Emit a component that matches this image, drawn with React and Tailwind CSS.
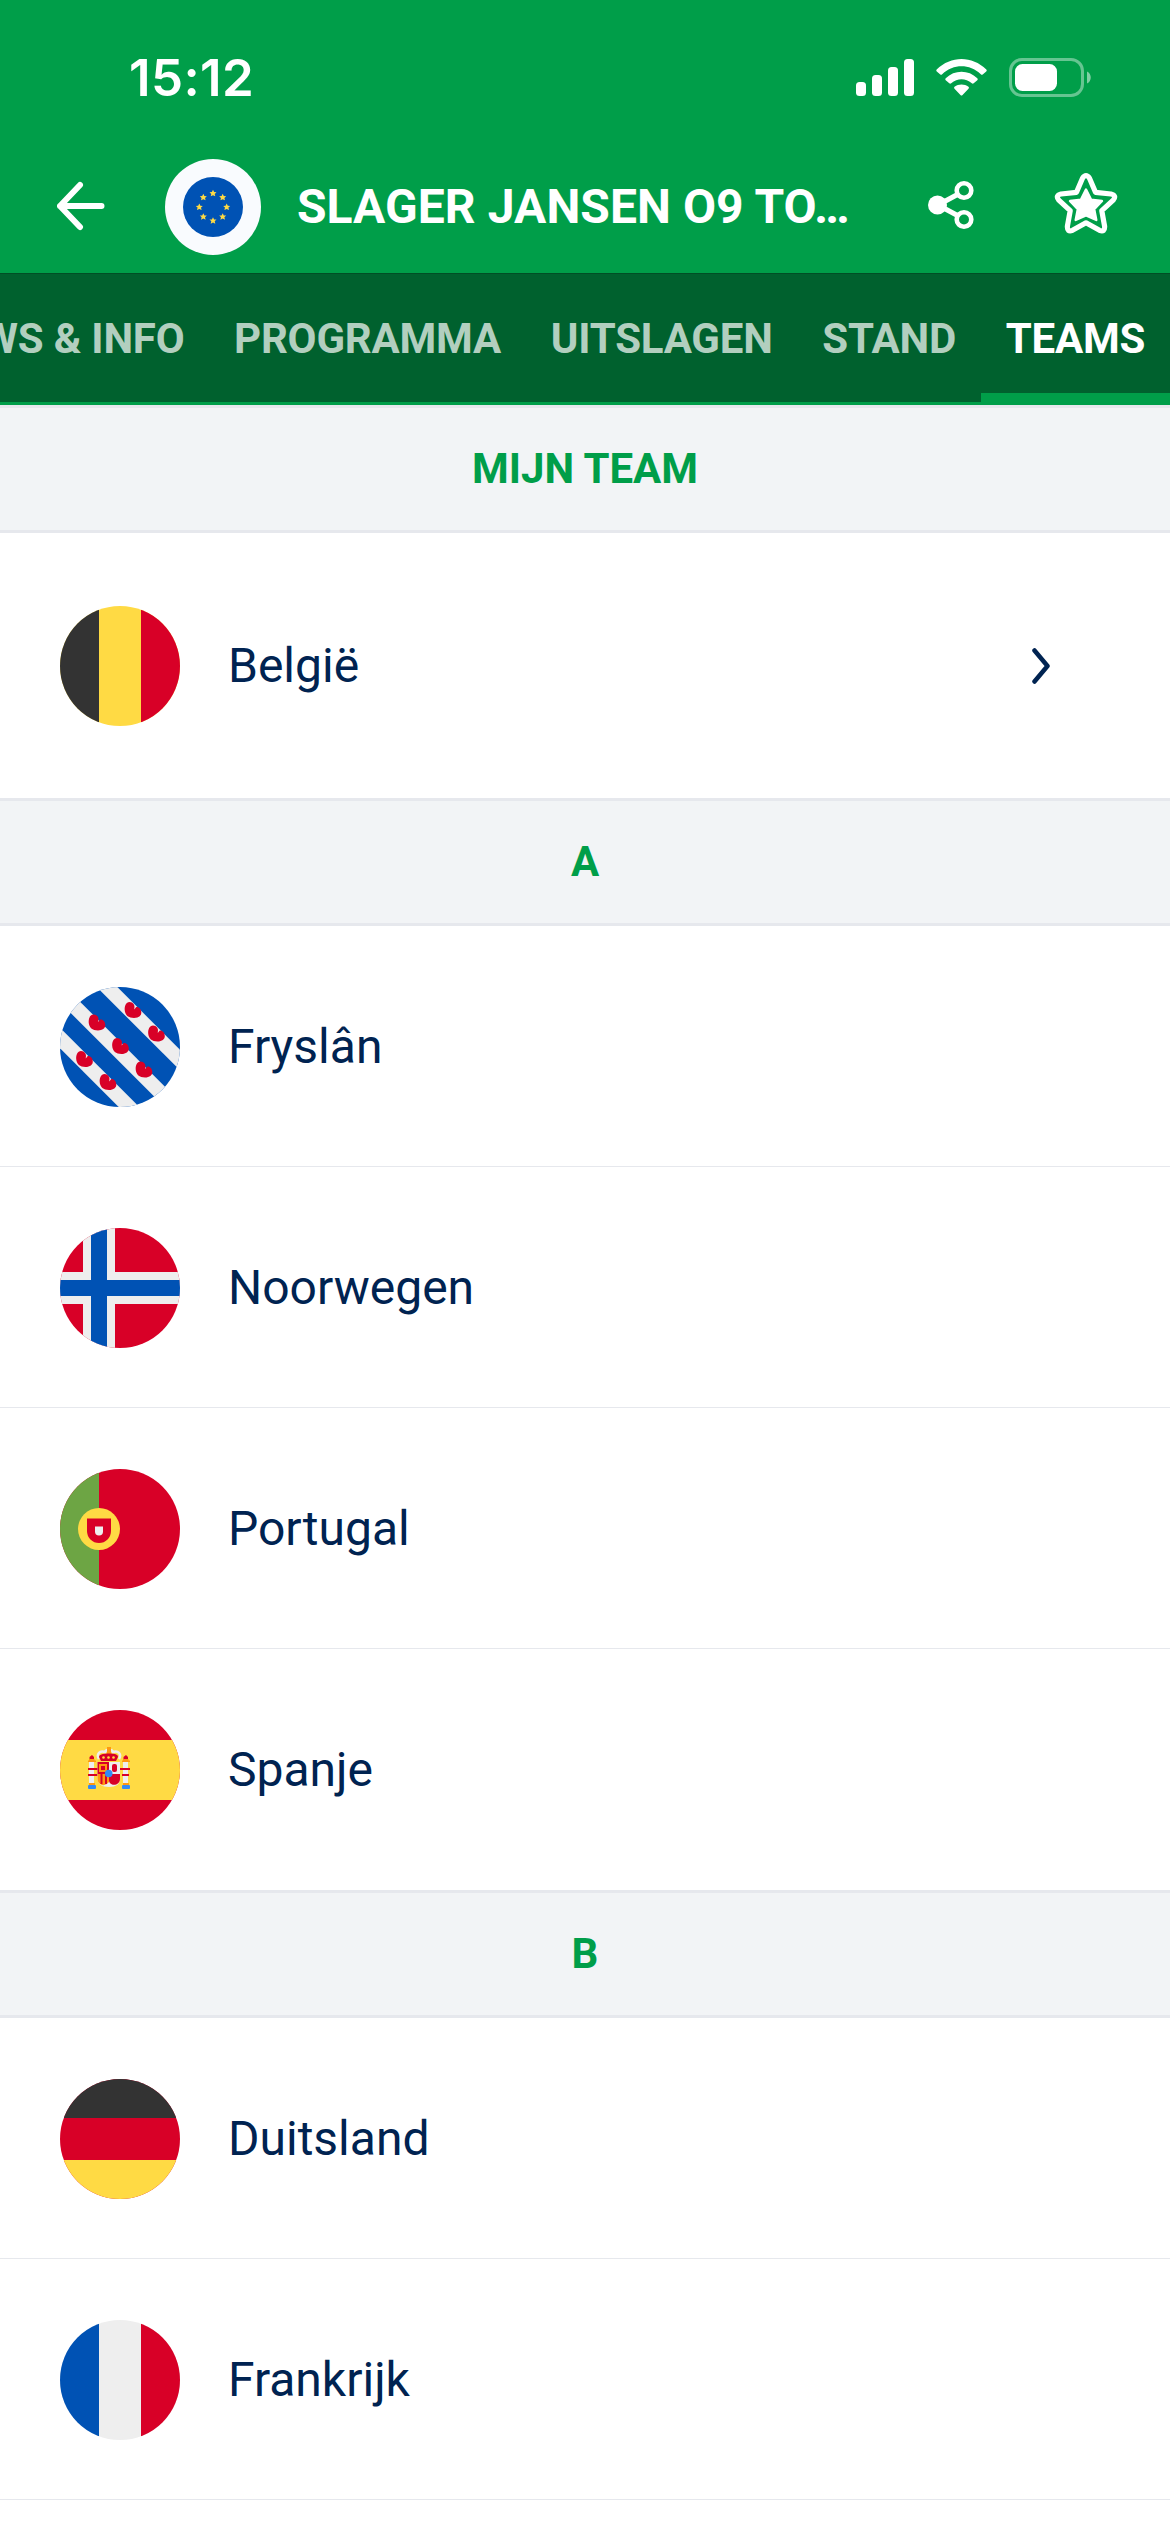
const flagColors = {
  red: '#d80027',
  blue: '#0052b4',
  yellow: '#ffda44',
  white: '#eeeeee',
  black: '#333333',
  green: '#6da544',
  orange: '#ff9811',
  sky: '#338af3',
}

const tabs = [
  { name: 'NEWS & INFO' },
  { name: 'PROGRAMMA' },
  { name: 'UITSLAGEN' },
  { name: 'STAND' },
  { name: 'TEAMS', active: true },
]

const groups = [
  {
    name: 'A',
    teams: [
      { name: 'Fryslân', flag: FrieslandFlag, divider: true },
      { name: 'Noorwegen', flag: NorwayFlag, divider: true },
      { name: 'Portugal', flag: PortugalFlag, divider: true },
      { name: 'Spanje', flag: SpainFlag },
    ],
  },
  {
    name: 'B',
    teams: [
      { name: 'Duitsland', flag: GermanyFlag, divider: true },
      { name: 'Frankrijk', flag: FranceFlag, divider: true },
    ],
  },
]

function Flag({ children }) {
  return (
    <svg
      aria-hidden="true"
      className="size-[120px] shrink-0 rounded-full"
      viewBox="0 0 120 120"
    >
      {children}
    </svg>
  )
}

function VerticalFlag({ left, middle, right }) {
  return (
    <Flag>
      <rect fill={middle} height="120" width="120" />
      <rect fill={left} height="120" width="39" />
      <rect fill={right} height="120" width="39" x="81" />
    </Flag>
  )
}

function BelgiumFlag() {
  return (
    <VerticalFlag
      left={flagColors.black}
      middle={flagColors.yellow}
      right={flagColors.red}
    />
  )
}

function FranceFlag() {
  return (
    <VerticalFlag
      left={flagColors.blue}
      middle={flagColors.white}
      right={flagColors.red}
    />
  )
}

function GermanyFlag() {
  return (
    <Flag>
      <rect fill={flagColors.red} height="120" width="120" />
      <rect fill={flagColors.black} height="39" width="120" />
      <rect fill={flagColors.yellow} height="39" width="120" y="81" />
    </Flag>
  )
}

// Centres of the seven red water lily leaves
const lilyLeaves = [
  [73, 23],
  [96.5, 46.5],
  [37, 35.5],
  [60.5, 59],
  [84, 82.5],
  [24.5, 72],
  [48, 95],
]

function FrieslandFlag() {
  return (
    <Flag>
      <rect fill={flagColors.blue} height="120" width="120" />
      <g stroke={flagColors.white} strokeWidth="14.6">
        <path d="M31 -16L140 93" />
        <path d="M-6 -1L122 127" />
        <path d="M-20 31L90 141" />
      </g>
      {lilyLeaves.map(([x, y]) => (
        <path
          d="M1.300 -1.500C2.300 -5 0 -8 -3.500 -8C-7 -8 -8.500 -4 -8.300 0C-8 5 -4.500 8 1 8C5.500 8 8.500 5.500 8.300 2.500C8.200 -1 5.500 -3.500 3 -2.800L1.300 -.6Z"
          fill={flagColors.red}
          key={`${x}-${y}`}
          transform={`translate(${x} ${y})`}
        />
      ))}
    </Flag>
  )
}

function NorwayFlag() {
  return (
    <Flag>
      <rect fill={flagColors.red} height="120" width="120" />
      <path d="M39 0V120M0 60H120" stroke={flagColors.white} strokeWidth="32" />
      <path d="M39 0V120M0 60H120" stroke={flagColors.blue} strokeWidth="16" />
    </Flag>
  )
}

function PortugalFlag() {
  return (
    <Flag>
      <rect fill={flagColors.red} height="120" width="120" />
      <rect fill={flagColors.green} height="120" width="39" />
      <circle cx="39" cy="60" fill={flagColors.yellow} r="21" />
      <path d="M27 49.500H51V62A12 12 0 0 1 27 62Z" fill={flagColors.red} />
      <path
        d="M35 57.500H43V62.500A4 4 0 0 1 35 62.500Z"
        fill={flagColors.white}
      />
    </Flag>
  )
}

function SpainFlag() {
  return (
    <Flag>
      <rect fill={flagColors.red} height="120" width="120" />
      <rect fill={flagColors.yellow} height="60" width="120" y="30" />
      {[29, 63].map((x) => (
        <g key={x} transform={`translate(${x} 0)`}>
          <rect fill={flagColors.white} height="24" width="5" y="51" />
          <path d="M.5 49V47L3 45L5 47V49Z" fill={flagColors.red} />
          <path
            d="M0 49H5.500V50.500H7V52H-1V50.500H0Z"
            fill={flagColors.orange}
          />
          <path d="M0 73H6V75H0Z" fill={flagColors.orange} />
          <rect fill={flagColors.sky} height="4" rx="1" width="8" x="-1" y="75" />
        </g>
      ))}
      <path
        d="M28 59H38M28 65H38M60 59H70M62 65H69"
        stroke={flagColors.red}
        strokeWidth="2"
      />
      <path
        d="M39 49C36 44 40 40 45 42C46 39 52 39 53 42C58 40 62 44 59 49"
        fill="none"
        stroke={flagColors.white}
        strokeWidth="2.5"
      />
      <path d="M47 37H51V44H47Z" fill={flagColors.orange} />
      <path
        d="M41 51L39 47C39 45 42 43.500 49 43.500S58 45 58 47L56 51Z"
        fill={flagColors.red}
      />
      <g fill={flagColors.yellow}>
        <circle cx="43.500" cy="47.500" r="1.300" />
        <circle cx="48.500" cy="47.500" r="1.300" />
        <circle cx="53.500" cy="47.500" r="1.300" />
      </g>
      <path
        d="M37.500 52H60V69C60 74 56 77 49 77S37.500 74 37.500 69Z"
        fill={flagColors.white}
      />
      <path d="M37.500 52H49V64H37.500Z" fill={flagColors.red} />
      <path d="M39 54H47V62H39Z" fill={flagColors.orange} />
      <path d="M41 56H45V60H41Z" fill={flagColors.red} />
      <path
        d="M37.500 64H49V72Q46 76 42 75Q37.500 73 37.500 69Z"
        fill={flagColors.orange}
      />
      <path
        d="M41.500 64V74M46 64V74"
        stroke={flagColors.red}
        strokeWidth="2"
      />
      <path d="M49 64H60V69C60 76 49 77 49 70Z" fill={flagColors.red} />
      <rect fill={flagColors.red} height="8" rx="2" width="5" x="52" y="54" />
      <circle cx="48.700" cy="63.500" fill={flagColors.sky} r="3.800" />
    </Flag>
  )
}

function EuropeBadge() {
  const stars = Array.from({ length: 8 }, (_, i) => {
    const angle = (i * Math.PI) / 4
    return [30 + 13.7 * Math.sin(angle), 30 - 13.7 * Math.cos(angle)]
  })

  return (
    <div className="flex size-24 shrink-0 items-center justify-center rounded-full bg-[#f9fbfe]">
      <svg aria-hidden="true" className="size-[60px]" viewBox="0 0 60 60">
        <circle cx="30" cy="30" fill={flagColors.blue} r="30" />
        {stars.map(([x, y]) => (
          <path
            d="M0 -3.500L1.100 -1.200L3.500 -1.100L1.700 .6L2.300 3L0 1.900L-2.300 3L-1.700 .6L-3.500 -1.100L-1.100 -1.200Z"
            fill={flagColors.yellow}
            key={`${x}-${y}`}
            transform={`translate(${x} ${y})`}
          />
        ))}
      </svg>
    </div>
  )
}

function StatusBar() {
  return (
    <div className="flex h-[159px] items-start justify-between pt-[50px] pr-[78px] pl-[129px]">
      <span className="font-['Inter',sans-serif] text-[51px] leading-[56px] font-semibold tracking-[0.4px]">
        15:12
      </span>
      <svg
        aria-hidden="true"
        className="mt-[7px] h-[42px] w-[238px]"
        fill="white"
        viewBox="854 57 238 42"
      >
        <rect height="14" rx="3.500" width="10" x="856" y="82" />
        <rect height="21" rx="3.500" width="10" x="872" y="75" />
        <rect height="29" rx="3.500" width="10" x="888" y="67" />
        <rect height="37" rx="3.500" width="10" x="904" y="59" />
        <path d="M936.700 69.500Q935.800 70.500 936.800 71.500L940.300 74.500Q941.200 75.200 942.200 74.300C953.500 63.700 969.500 63.700 980.800 74.300Q981.800 75.200 982.700 74.500L986.200 71.500Q987.200 70.500 986.300 69.500C972 55.500 951 55.500 936.700 69.500Z" />
        <path d="M945.700 78.300Q944.700 79.300 945.700 80.300L949.300 83.300Q950.200 84 951.200 83.200C957.500 77.900 965.500 77.900 971.800 83.200Q972.800 84 973.700 83.300L977.300 80.300Q978.300 79.300 977.300 78.300C968.500 69.700 954.500 69.700 945.700 78.300Z" />
        <path d="M954.500 86.800C958.500 83.700 964.500 83.700 968.500 86.800Q969.500 87.700 968.500 88.700L962.300 95.200Q961.500 96 960.700 95.200L954.500 88.700Q953.500 87.700 954.500 86.800Z" />
        <rect
          fill="none"
          height="36"
          opacity="0.4"
          rx="11.500"
          stroke="white"
          strokeWidth="3"
          width="72"
          x="1010.500"
          y="59.500"
        />
        <rect height="27" rx="7.500" width="42" x="1015" y="64" />
        <path
          d="M1087 71.500C1092 73.500 1092 81.500 1087 83.500Z"
          opacity="0.5"
        />
      </svg>
    </div>
  )
}

function ShareIcon() {
  return (
    <svg
      aria-hidden="true"
      className="mb-1 h-[50px] w-[46px]"
      fill="none"
      viewBox="0 0 46 50"
    >
      <path d="M10 25L36 11M10 25L36 39" stroke="white" strokeWidth="5" />
      <circle cx="9.500" cy="25" fill="white" r="9.500" />
      <g fill="#009e49" stroke="white" strokeWidth="4.600">
        <circle cx="36" cy="10.500" r="7.300" />
        <circle cx="36" cy="39.500" r="7.300" />
      </g>
    </svg>
  )
}

function FavoriteIcon() {
  return (
    <svg
      aria-hidden="true"
      className="mb-1.5 h-[62px] w-[64px]"
      strokeLinejoin="round"
      viewBox="0 0 64 62"
    >
      <path
        d="M28.500 5.200Q32 .2 35.500 5.200L41.500 19.300L57 21Q63 22.500 59.200 27.200L47.800 37.700L50.600 53.200Q51 59.500 45.500 57.300L32 49.800L18.500 57.300Q13 59.500 13.400 53.200L16.200 37.700L4.800 27.200Q1 22.500 7 21L22.500 19.300Z"
        fill="none"
        stroke="white"
        strokeWidth="5.200"
      />
      <path
        d="M32 16.500L37 26.600L48 28L40.200 36.200L42.300 47L32 42.500L21.700 47L23.800 36.200L16 28L27 26.600Z"
        fill="white"
        stroke="white"
        strokeWidth="2.400"
      />
    </svg>
  )
}

function AppHeader() {
  return (
    <div className="flex h-24 items-center pr-[52px] pl-[57px]">
      <svg
        aria-hidden="true"
        className="mb-0.5 h-[50px] w-[48px] shrink-0"
        fill="none"
        stroke="white"
        strokeLinecap="round"
        strokeLinejoin="round"
        strokeWidth="6"
        viewBox="0 0 48 50"
      >
        <path d="M44.500 25H3L23 4M3 25L23 46" />
      </svg>
      <div className="ml-[60px]">
        <EuropeBadge />
      </div>
      <h1 className="ml-9 flex-1 text-[48px] leading-none font-bold tracking-[0.07px] whitespace-nowrap">
        SLAGER JANSEN O9 TO…
      </h1>
      <div className="flex items-center gap-20">
        <ShareIcon />
        <FavoriteIcon />
      </div>
    </div>
  )
}

function TabBar() {
  return (
    <nav className="flex h-[132px] justify-end overflow-hidden border-t border-b-[3px] border-t-[#004f25] border-b-[#009e49] bg-[#00612e] text-[42px] leading-[48px] font-bold tracking-[-0.2px] text-[#b2cfbf]">
      {tabs.map((tab) => (
        <div
          className={
            tab.active
              ? 'relative shrink-0 px-[24.8px] pt-[41px] text-white'
              : 'shrink-0 px-[24.8px] pt-[41px]'
          }
          key={tab.name}
        >
          {tab.name}
          {tab.active && (
            <span className="absolute inset-x-0 bottom-0 h-[9px] bg-[#009e49]" />
          )}
        </div>
      ))}
    </nav>
  )
}

function SectionHeader({ children }) {
  return (
    <h2 className="flex h-32 items-center justify-center border-y-[3px] border-[#e6e8ed] bg-[#f2f4f6] text-[42px] leading-none font-bold text-[#009e49]">
      {children}
    </h2>
  )
}

function TeamRow({ team }) {
  const TeamFlag = team.flag

  return (
    <li
      className={
        team.divider
          ? 'flex h-[241px] items-center gap-12 border-b border-[#e6e8ed] px-[60px] pt-0.5'
          : 'flex h-[241px] items-center gap-12 border-b border-white px-[60px] pt-0.5'
      }
    >
      <TeamFlag />
      <span>{team.name}</span>
    </li>
  )
}

function App() {
  return (
    <div className="h-[2532px] w-[1170px] overflow-hidden bg-white font-['Roboto',sans-serif] text-[48px] leading-none text-[#002351]">
      <header className="h-[273px] bg-[#009e49] text-white">
        <StatusBar />
        <AppHeader />
      </header>
      <TabBar />
      <main>
        <SectionHeader>MIJN TEAM</SectionHeader>
        <div className="flex h-[265px] items-center gap-12 pt-px pr-[117px] pl-[60px]">
          <BelgiumFlag />
          <span className="flex-1">België</span>
          <svg
            aria-hidden="true"
            className="h-[36px] w-[21px]"
            fill="none"
            stroke="currentColor"
            strokeLinecap="round"
            strokeLinejoin="round"
            strokeWidth="4.500"
            viewBox="0 0 21 36"
          >
            <path d="M2.500 2.500L15.500 18L2.500 33.500" />
          </svg>
        </div>
        {groups.map((group) => (
          <section key={group.name}>
            <SectionHeader>{group.name}</SectionHeader>
            <ul>
              {group.teams.map((team) => (
                <TeamRow key={team.name} team={team} />
              ))}
            </ul>
          </section>
        ))}
      </main>
    </div>
  )
}

export default App
